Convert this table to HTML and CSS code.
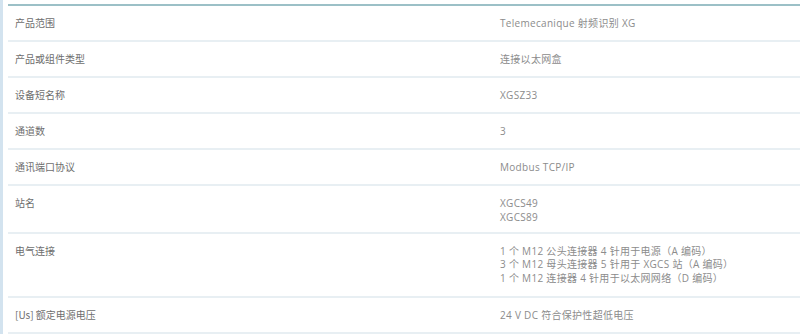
FILE: index.html
```html
<!DOCTYPE html>
<html lang="zh">
<head>
<meta charset="utf-8">
<link rel="stylesheet" href="styles.css">
</head>
<body>
<div class="page">
  <div class="specs">
    <div class="row"><div class="label">产品范围</div><div class="value"><div class="line">Telemecanique 射频识别 XG</div></div></div>
    <div class="row"><div class="label">产品或组件类型</div><div class="value"><div class="line">连接以太网盒</div></div></div>
    <div class="row"><div class="label">设备短名称</div><div class="value"><div class="line">XGSZ33</div></div></div>
    <div class="row"><div class="label">通道数</div><div class="value"><div class="line">3</div></div></div>
    <div class="row"><div class="label">通讯端口协议</div><div class="value"><div class="line">Modbus TCP/IP</div></div></div>
    <div class="row row-pair"><div class="label">站名</div><div class="value pair"><div class="line">XGCS49</div><div class="line">XGCS89</div></div></div>
    <div class="row"><div class="label">电气连接</div><div class="value multi"><div class="line">1 个 M12 公头连接器 4 针用于电源（A 编码）</div><div class="line">3 个 M12 母头连接器 5 针用于 XGCS 站（A 编码）</div><div class="line">1 个 M12 连接器 4 针用于以太网网络（D 编码）</div></div></div>
    <div class="row"><div class="label">[Us] 额定电源电压</div><div class="value"><div class="line">24 V DC 符合保护性超低电压</div></div></div>
  </div>
</div>
</body>
</html>
```
FILE: styles.css
```css
html, body {
  margin: 0;
  padding: 0;
  background: #ffffff;
}
.page {
  height: 334px;
  border-left: 3px solid #d3e3ef;
  padding: 4px 0 0 5px;
  box-sizing: border-box;
  overflow: hidden;
}
.specs {
  border-top: 2px solid #9cc0c7;
}
.row {
  display: grid;
  grid-template-columns: 492px 1fr;
  border-bottom: 2px solid #e8eff3;
  padding: 11px 0;
  font-size: 10px;
}
.row-pair {
  padding: 10px 0 8px;
}
.label {
  padding-left: 7px;
  color: #6e6e6e;
  font-family: "Noto Sans CJK SC", "Noto Sans", sans-serif;
  height: 12px;
  line-height: 12px;
}
.row-pair .label {
  margin-top: 1px;
}
.value {
  color: #8c8c8c;
  font-family: "Open Sans", "Noto Sans CJK SC", sans-serif;
  letter-spacing: 0.3px;
}
.line {
  height: 12px;
  line-height: 12px;
  white-space: nowrap;
}
.pair .line {
  height: 14px;
  line-height: 14px;
}
.multi .line {
  height: 13.33px;
  line-height: 13.33px;
}
```
